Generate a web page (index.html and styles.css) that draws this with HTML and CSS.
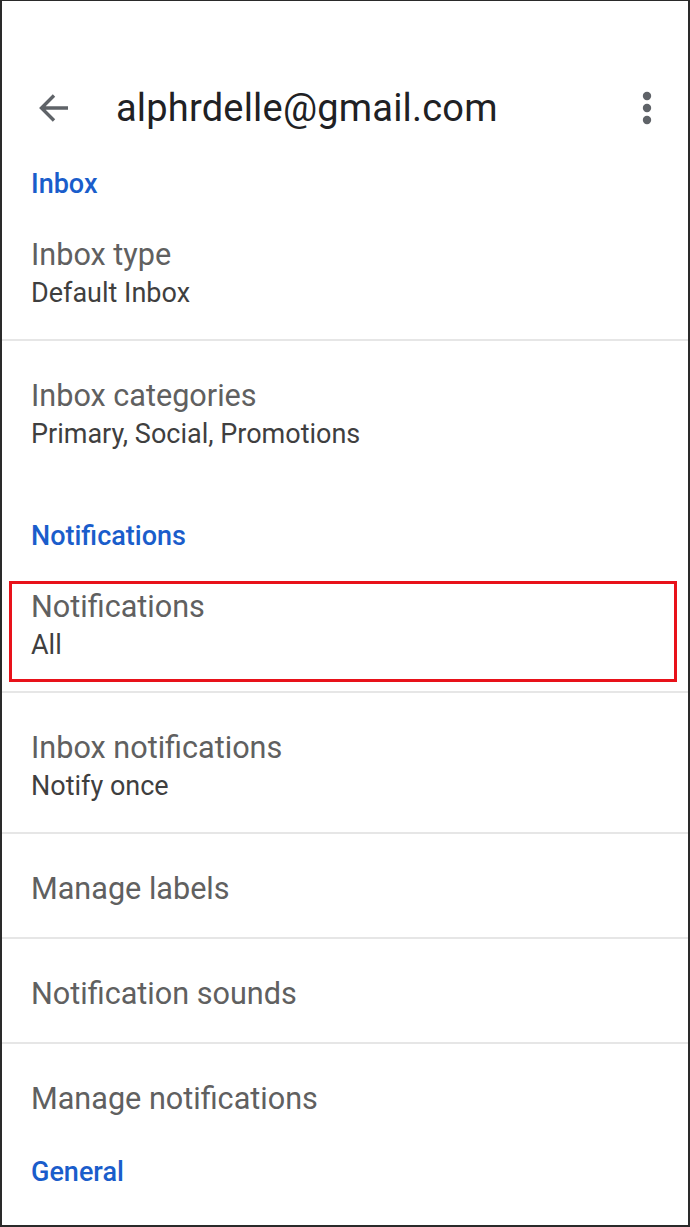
FILE: index.html
```html
<!DOCTYPE html>
<html lang="en">

<head>
    <meta charset="UTF-8">
    <meta name="viewport" content="width=device-width, initial-scale=1.0">
    <title>Settings</title>
    <link rel="stylesheet" href="styles.css">
</head>

<body>
    <div class="screen">
        <div class="app-bar">
            <svg class="back-icon" width="32" height="32" viewBox="0 0 32 32">
                <path d="M30 16H4M16 3.5L3.5 16L16 28.5" fill="none" stroke="#5f6368" stroke-width="3.4" />
            </svg>
            <div class="account">alphrdelle@gmail.com</div>
            <svg class="more-icon" width="10" height="34" viewBox="0 0 10 34">
                <circle cx="5" cy="5" r="4.2" fill="#5f6368" />
                <circle cx="5" cy="17" r="4.2" fill="#5f6368" />
                <circle cx="5" cy="29" r="4.2" fill="#5f6368" />
            </svg>
        </div>

        <div class="section-title">Inbox</div>
        <div class="pref">
            <div class="pref-title">Inbox type</div>
            <div class="pref-summary">Default Inbox</div>
        </div>
        <div class="pref last">
            <div class="pref-title">Inbox categories</div>
            <div class="pref-summary">Primary, Social, Promotions</div>
        </div>

        <div class="section-title">Notifications</div>
        <div class="pref marked">
            <div class="pref-title">Notifications</div>
            <div class="pref-summary">All</div>
        </div>
        <div class="pref">
            <div class="pref-title">Inbox notifications</div>
            <div class="pref-summary">Notify once</div>
        </div>
        <div class="pref">
            <div class="pref-title">Manage labels</div>
        </div>
        <div class="pref">
            <div class="pref-title">Notification sounds</div>
        </div>
        <div class="pref last">
            <div class="pref-title">Manage notifications</div>
        </div>

        <div class="section-title tight">General</div>
    </div>
</body>

</html>
```

FILE: styles.css
```css
* {
    box-sizing: border-box;
}

body {
    margin: 0;
    background-color: white;
    font-family: Roboto, "Liberation Sans", sans-serif;
}

.screen {
    width: 690px;
    height: 1227px;
    border-top: 1px solid #2a2a2a;
    border-left: 2px solid #2a2a2a;
    border-right: 2px solid #2a2a2a;
    border-bottom: 2px solid #2a2a2a;
    overflow: hidden;
}

.app-bar {
    display: flex;
    align-items: center;
    height: 129px;
    padding: 85px 0 0 36px;
}

.back-icon {
    flex-shrink: 0;
}

.account {
    flex: 1;
    margin-left: 46px;
    font-size: 38px;
    line-height: 44px;
    color: #202124;
    letter-spacing: 0.2px;
}

.more-icon {
    margin-right: 36px;
}

.section-title {
    padding: 38px 0 0 29px;
    font-size: 27px;
    line-height: 32px;
    font-weight: 500;
    color: #1a5dcb;
}

.section-title.tight {
    padding-top: 7px;
}

.pref {
    position: relative;
    padding: 35px 29px 28px;
    border-bottom: 2px solid #e6e6e6;
}

.pref.last {
    border-bottom-color: transparent;
}

.pref-title {
    font-size: 30.6px;
    line-height: 40px;
    color: #606060;
}

.pref-summary {
    font-size: 27px;
    line-height: 36px;
    color: #3f3f3f;
}

/* red highlight drawn over the row */
.pref.marked::after {
    content: "";
    position: absolute;
    top: 29px;
    left: 7px;
    width: 662px;
    height: 95px;
    border: 3px solid #e8121a;
}
```
